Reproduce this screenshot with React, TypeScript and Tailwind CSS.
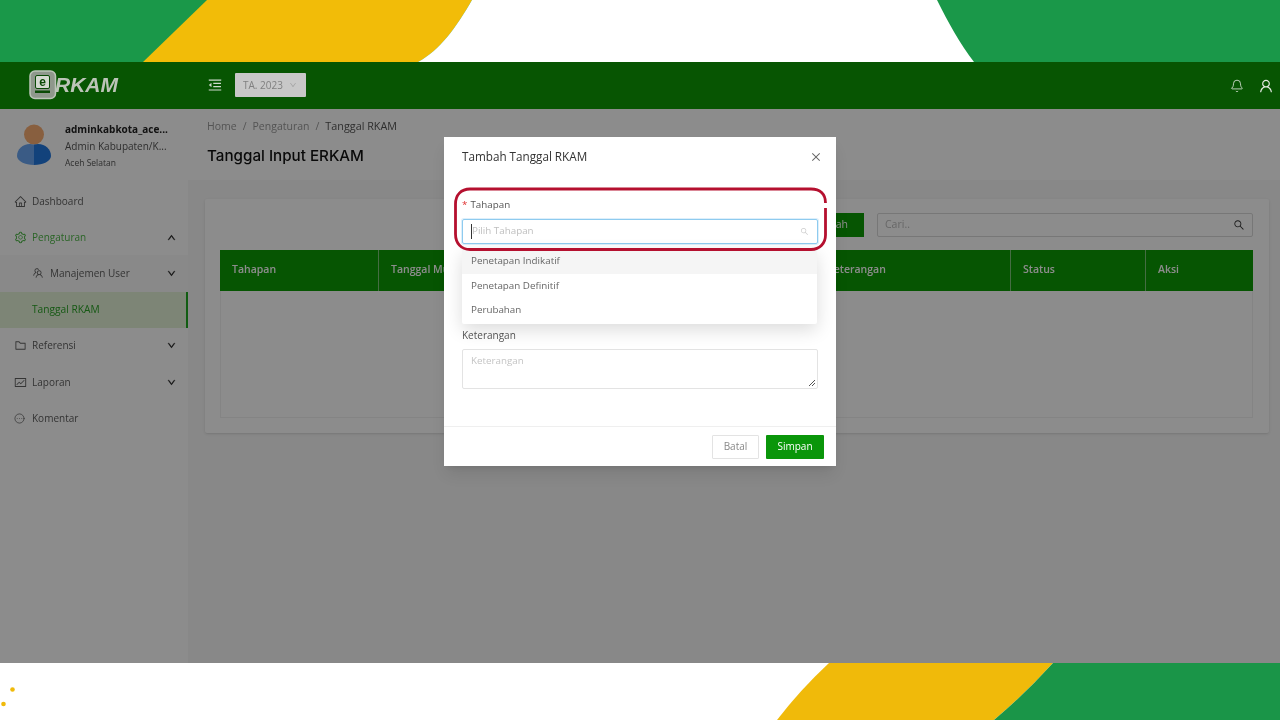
import React from "react";
import { AiOutlineHome, AiOutlineSetting, AiOutlineFolder, AiOutlineFund, AiOutlineDown, AiOutlineUp, AiOutlineSearch, AiOutlineClose, AiOutlineMenuFold, AiOutlineUser, AiOutlineTeam } from "react-icons/ai";
import { Bell, CircleEllipsis } from "lucide-react";

function TopBanner() {
  return (
    <svg className="block w-full h-[62px] shrink-0" viewBox="0 0 1280 62" preserveAspectRatio="none">
      <rect width="1280" height="62" fill="#1a9849" />
      <path d="M143 62 L207 0 L472 0 C456 28 440 50 418 62 Z" fill="#f2bc08" />
      <path d="M418 62 C440 50 456 28 472 0 L937 0 C948 22 960 44 974 62 Z" fill="#ffffff" />
    </svg>
  );
}

function BottomBanner() {
  return (
    <svg className="block w-full h-[57px] shrink-0" viewBox="0 0 1280 57" preserveAspectRatio="none">
      <rect width="1280" height="57" fill="#ffffff" />
      <path d="M829 0 Q800 27 777 57 L994 57 Q1026 30 1053 0 Z" fill="#f0ba0a" />
      <path d="M1053 0 Q1026 30 994 57 L1280 57 L1280 0 Z" fill="#1a9548" />
      <circle cx="12.5" cy="26.5" r="2.3" fill="#f0ba0a" />
      <circle cx="3.5" cy="41" r="2.3" fill="#f0ba0a" />
    </svg>
  );
}

function Logo() {
  return (
    <div className="flex items-center w-[188px] pl-[29px] shrink-0 -mt-[2px]">
      <svg width="28" height="30" viewBox="0 0 28 30" className="shrink-0">
        <rect x="1" y="1" width="25.5" height="27.5" rx="5" fill="#8f988c" stroke="#bcc5b8" strokeWidth="1.5" />
        <rect x="6.5" y="5.5" width="14" height="13" rx="1.5" fill="#d4d9d0" stroke="#0a4a05" strokeWidth="1" />
        <rect x="6" y="20.5" width="15" height="2.5" fill="#0a4a05" />
        <text x="13.5" y="16" textAnchor="middle" fontSize="12" fontWeight="700" fontFamily="Liberation Sans, sans-serif" fill="#0a4a05">e</text>
      </svg>
      <span className="text-[21px] leading-none font-bold italic text-[#bcc4b8] font-['Liberation_Sans',sans-serif] -ml-[2px]">RKAM</span>
    </div>
  );
}

function Header() {
  return (
    <div className="h-[47px] shrink-0 bg-[#075502] flex items-center relative z-10">
      <Logo />
      <AiOutlineMenuFold className="ml-[19px] text-[#cfd9cd] -mt-[2px]" size={16} />
      <div className="ml-[12px] -mt-[1px] w-[71px] h-[24px] bg-[#c8c8c8] rounded-[1px] flex items-center pl-[8px] gap-[6px] text-[10px] text-[#808080]">
        <span>TA. 2023</span>
        <AiOutlineDown size={8} className="text-[#a0a0a0]" />
      </div>
      <div className="ml-auto flex items-center gap-[14px] pr-[6px] text-[#e4e9e2]">
        <Bell size={14} strokeWidth={1.4} />
        <AiOutlineUser size={16} />
      </div>
    </div>
  );
}

function MenuRow({ icon, label, chevron, active, sub }: { icon?: React.ReactNode; label: string; chevron?: "up" | "down"; active?: boolean; sub?: boolean }) {
  return (
    <div className={"h-[36.2px] flex items-center text-[10px] " + (sub ? "pl-[32px] " : "pl-[14px] ") + (active ? "text-[#4fb848]" : "text-[#606060]")}>
      {icon && <span className="w-[18px] shrink-0 flex items-center">{icon}</span>}
      <span>{label}</span>
      {chevron && (
        <span className="ml-auto mr-[12px] text-[#222]">
          {chevron === "up" ? <AiOutlineUp size={9} strokeWidth={60} /> : <AiOutlineDown size={9} strokeWidth={60} />}
        </span>
      )}
    </div>
  );
}

function Sidebar() {
  return (
    <div className="w-[188px] shrink-0 bg-white flex flex-col">
      <div className="h-[74px] flex items-start pl-[17px] pt-[15px] shrink-0">
        <svg width="34" height="41" viewBox="0 0 34 41" className="shrink-0">
          <circle cx="17" cy="10.5" r="10" fill="#f8ae74" />
          <path d="M17 20.5 C8 18 0 24 0 32 C0 37 8 41 17 41 Z" fill="#6aa6f2" />
          <path d="M17 20.5 C26 18 34 24 34 32 C34 37 26 41 17 41 Z" fill="#2278e0" />
        </svg>
        <div className="ml-[14px] flex flex-col">
          <span className="text-[10px] leading-[14px] mt-[-2px] font-bold text-[#222]">adminkabkota_ace...</span>
          <span className="text-[10px] leading-[14px] mt-[3px] text-[#555]">Admin Kabupaten/K...</span>
          <span className="text-[8.5px] leading-[12px] mt-[4px] text-[#555]">Aceh Selatan</span>
        </div>
      </div>
      <MenuRow icon={<AiOutlineHome size={13} />} label="Dashboard" />
      <MenuRow icon={<AiOutlineSetting size={13} />} label="Pengaturan" chevron="up" active />
      <div className="bg-[#fafafa]">
        <MenuRow sub icon={<AiOutlineTeam size={12} />} label="Manajemen User" chevron="down" />
        <div className="h-[36.2px] flex items-center pl-[32px] text-[10.2px] text-[#2ba326] bg-[#e3f2d8] border-r-[2px] border-[#1faa1f]">Tanggal RKAM</div>
      </div>
      <MenuRow icon={<AiOutlineFolder size={13} />} label="Referensi" chevron="down" />
      <MenuRow icon={<AiOutlineFund size={13} />} label="Laporan" chevron="down" />
      <MenuRow icon={<CircleEllipsis size={11} strokeWidth={1.6} />} label="Komentar" />
    </div>
  );
}

const columns = ["Tahapan", "Tanggal Mulai", "Tanggal Selesai", "Keterangan", "Status", "Aksi"];

function Content() {
  return (
    <div className="flex-1 min-w-0 bg-[#f7f7f7] flex flex-col">
      <div className="bg-white h-[71px] pl-[19px] pt-[10px] shrink-0">
        <div className="text-[10.5px] leading-[14px] flex gap-[6px] text-[#999]">
          <span>Home</span><span>/</span><span>Pengaturan</span><span>/</span><span className="text-[#555] text-[10.8px]">Tanggal RKAM</span>
        </div>
        <div className="mt-[13px] text-[15.2px] leading-[20px] font-medium text-[#111] font-['Inter',sans-serif]">Tanggal Input ERKAM</div>
      </div>
      <div className="ml-[17px] mt-[19px] mr-[11px] h-[234px] bg-white rounded-[2px] shadow-sm pl-[15px] pr-[16px] pt-[14px]">
        <div className="flex justify-end items-center h-[24px] gap-[13px]">
          <div className="w-[72px] h-full bg-[#0c9b04] text-white text-[10.5px] flex items-center justify-center">Tambah</div>
          <div className="w-[376px] h-full border border-[#d9d9d9] rounded-[2px] flex items-center justify-between pl-[7px] pr-[7px] text-[10.5px] text-[#bbb]">
            <span>Cari..</span>
            <AiOutlineSearch size={12} className="text-[#333]" />
          </div>
        </div>
        <div className="mt-[13px] border border-[#f0f0f0] h-[168px]">
          <div className="grid grid-cols-[159px_218px_218px_196px_135px_1fr] h-[41px] -mx-[1px] -mt-[1px]">
            {columns.map((c) => (
              <div key={c} className="bg-[#0c9b04] text-white text-[10.5px] font-semibold flex items-center pl-[12px] pb-[1px] border-r border-[#7ec77a] last:border-r-0">{c}</div>
            ))}
          </div>
        </div>
      </div>
    </div>
  );
}

function Modal() {
  return (
    <div className="relative w-[392px] h-[329px] bg-white shadow-lg font-['Open_Sans',sans-serif]">
      <div className="h-[40px] flex items-center justify-between pl-[18px] pr-[14px] text-[11.7px] font-medium text-[#333]">
        <span>Tambah Tanggal RKAM</span>
        <AiOutlineClose size={12} className="text-[#666]" />
      </div>
      <div className="px-[18px] pt-[21px]">
        <div className="text-[9.8px] leading-[14px] text-[#555]"><span className="text-[#e03030] mr-[3px]">*</span>Tahapan</div>
        <div className="mt-[7px] h-[25px] border border-[#8ecbef] rounded-[2px] shadow-[0_0_0_1px_rgba(120,190,240,0.25)] flex items-center justify-between pl-[8px] pr-[8px] text-[9.8px] text-[#bfbfbf]">
          <span className="border-l border-[#333]">Pilih Tahapan</span>
          <AiOutlineSearch size={9} className="text-[#ccc]" />
        </div>
        <div className="mt-[84px] text-[10px] leading-[14px] text-[#555]">Keterangan</div>
        <div className="mt-[7px] relative h-[40px] border border-[#e3e3e3] rounded-[2px] pl-[8px] pt-[4px] text-[9.8px] leading-[14px] text-[#c4c4c4]">
          Keterangan
          <svg width="8" height="8" viewBox="0 0 8 8" className="absolute right-[1px] bottom-[1px]">
            <path d="M1 7 L7 1 M4 7 L7 4" stroke="#555" strokeWidth="1" />
          </svg>
        </div>
      </div>
      <div className="absolute left-0 right-0 bottom-0 h-[40px] border-t border-[#efefef] flex items-center justify-end pr-[12px] gap-[7px]">
        <div className="w-[47px] h-[24px] border border-[#e3e3e3] rounded-[1px] text-[10px] text-[#888] flex items-center justify-center">Batal</div>
        <div className="w-[58px] h-[24px] bg-[#0a960a] rounded-[1px] text-[10px] font-medium text-white flex items-center justify-center">Simpan</div>
      </div>
      <div className="absolute left-[18px] top-[112px] w-[355px] h-[75px] bg-white shadow-[0_6px_18px_rgba(0,0,0,0.14)] text-[9.8px] text-[#666] rounded-[2px]">
        <div className="h-[25px] flex items-center pl-[9px] bg-[#f5f5f5]">Penetapan Indikatif</div>
        <div className="h-[24px] flex items-center pl-[9px]">Penetapan Definitif</div>
        <div className="h-[24px] flex items-center pl-[9px]">Perubahan</div>
      </div>
      <svg width="376" height="67" viewBox="0 0 376 67" className="absolute left-[9px] top-[49px] pointer-events-none">
        <path d="M372.5 17 C372.5 8 367 3 358 3 L17 3 C8 3 2.5 9 2.5 18 L2.5 48 C2.5 57 8 63.5 17 63.5 L358 63.5 C367 63.5 372.5 57 372.5 49 L372.5 22" fill="none" stroke="#b5102f" strokeWidth="2.8" />
      </svg>
    </div>
  );
}

export default function App() {
  return (
    <div className="w-[1280px] h-[720px] overflow-hidden flex flex-col font-['Open_Sans',sans-serif] bg-white blur-[0.4px]">
      <TopBanner />
      <div className="h-[601px] shrink-0 flex flex-col">
        <Header />
        <div className="relative flex-1 min-h-0 flex">
          <Sidebar />
          <Content />
          <div className="absolute inset-0 bg-black/45 flex justify-center pt-[28px]">
            <Modal />
          </div>
        </div>
      </div>
      <BottomBanner />
    </div>
  );
}
